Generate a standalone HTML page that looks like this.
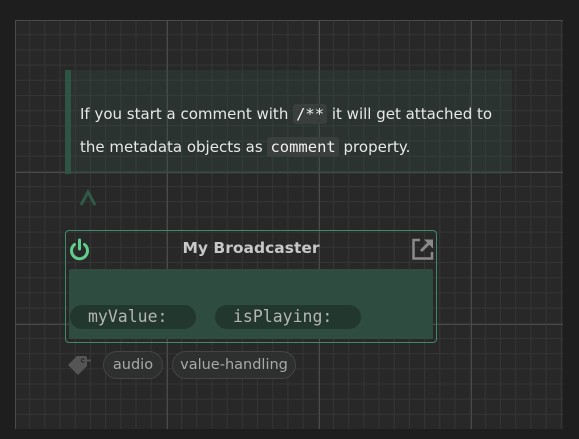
<!DOCTYPE html>
<html><head><meta charset="utf-8"><style>
*{margin:0;padding:0;box-sizing:border-box}
html,body{width:579px;height:439px;background:#1e1e1e;overflow:hidden;font-family:"DejaVu Sans","Liberation Sans",sans-serif}
#canvas{position:absolute;left:15px;top:20px;width:548px;height:409px;background-color:#282828;
background-image:
linear-gradient(to right,transparent calc(100% - 1px),#4a4a4a calc(100% - 1px)),
linear-gradient(to bottom,transparent calc(100% - 1px),#4a4a4a calc(100% - 1px)),
linear-gradient(to right,transparent calc(100% - 1px),#353535 calc(100% - 1px)),
linear-gradient(to bottom,transparent calc(100% - 1px),#353535 calc(100% - 1px));
background-size:152px 152px,152px 152px,15.2px 15.2px,15.2px 15.2px;
background-position:1px 1px,1px 1px,0 0,0 0}
.abs{position:absolute}
#comment{left:65px;top:70px;width:447px;height:104px;background:rgba(50,80,66,0.3);border-left:6px solid #2e5446}
#comment p{position:absolute;left:9px;top:28px;color:#e8e8e8;font-size:15px;line-height:33px;white-space:nowrap;letter-spacing:0}
code{font-family:"DejaVu Sans Mono","Liberation Mono",monospace;background:#3a3f3d;border-radius:3px;padding:1px 3px;font-size:15.5px;color:#eee}
#node{left:65px;top:230px;width:372px;height:113px;border:1.5px solid #3e8a69;border-radius:4px}
#title{left:0;top:8px;width:100%;text-align:center;color:#c8c8c8;font-weight:bold;font-size:15.5px}
#body{left:3px;top:38px;width:364px;height:70px;background:#2e4c40;border-radius:2px}
.pill{position:absolute;top:36px;height:24px;background:#22372e;border-radius:12px;color:#b5b5b5;font-family:"DejaVu Sans Mono","Liberation Mono",monospace;font-size:16.5px;line-height:24px}
.tag{position:absolute;top:351px;height:28px;border:1px solid #444;background:#2e302f;border-radius:14px;color:#a8a8a8;font-size:14.5px;line-height:26px;text-align:center}
</style></head><body>
<div id="canvas"></div>
<div id="comment" class="abs"><p>If you start a comment with <code>/**</code> it will get attached to<br>the metadata objects as <code>comment</code> property.</p></div>
<svg class="abs" style="left:78px;top:186px" width="22" height="22"><path d="M3 19 L10 6 L17 19" fill="none" stroke="#2e5a48" stroke-width="3"/></svg>
<div id="node" class="abs">
<div id="title" class="abs">My Broadcaster</div>
<div id="body" class="abs">
<div class="pill" style="left:1px;width:126px;padding-left:18px">myValue:</div>
<div class="pill" style="left:146px;width:146px;padding-left:18px">isPlaying:</div>
</div>
</div>
<svg class="abs" style="left:67px;top:237px" width="26" height="26"><path d="M7.5 7.5 A8 8 0 1 0 17.5 7.5" fill="none" stroke="#5fcf8d" stroke-width="3" stroke-linecap="round"/><path d="M12.5 3 V12" stroke="#5fcf8d" stroke-width="3" stroke-linecap="round"/></svg>
<svg class="abs" style="left:410px;top:236px" width="26" height="26"><path d="M10 4 H3.5 V22.5 H22 V16" fill="none" stroke="#8a8a8a" stroke-width="2.5"/><path d="M11 15 L21 5" stroke="#8a8a8a" stroke-width="3"/><path d="M14 3.5 H23 V12.5 Z" fill="#8a8a8a"/></svg>
<svg class="abs" style="left:66px;top:354px" width="28" height="24"><path d="M2 11 L11 2 H19 Q21 2 21 4 V12 L12 21 Z" fill="#555"/><circle cx="17" cy="6.5" r="2.2" fill="#282828"/><path d="M16 6.5 H25" stroke="#555" stroke-width="2"/></svg>
<div class="tag" style="left:103px;width:60px">audio</div>
<div class="tag" style="left:172px;width:124px">value-handling</div>
</body></html>
